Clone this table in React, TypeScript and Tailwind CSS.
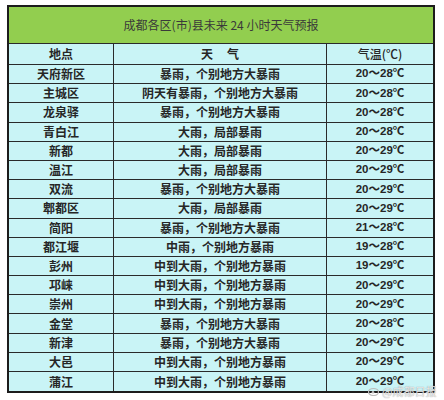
import React from 'react'

interface Row {
  place: string
  weather: string
  temp: string
}

const rows: Row[] = [
  { place: '天府新区', weather: '暴雨，个别地方大暴雨', temp: '20～28℃' },
  { place: '主城区', weather: '阴天有暴雨，个别地方大暴雨', temp: '20～28℃' },
  { place: '龙泉驿', weather: '暴雨，个别地方大暴雨', temp: '20～28℃' },
  { place: '青白江', weather: '大雨，局部暴雨', temp: '20～28℃' },
  { place: '新都', weather: '大雨，局部暴雨', temp: '20～29℃' },
  { place: '温江', weather: '大雨，局部暴雨', temp: '20～29℃' },
  { place: '双流', weather: '暴雨，个别地方大暴雨', temp: '20～29℃' },
  { place: '郫都区', weather: '大雨，局部暴雨', temp: '20～29℃' },
  { place: '简阳', weather: '暴雨，个别地方大暴雨', temp: '21～28℃' },
  { place: '都江堰', weather: '中雨，个别地方暴雨', temp: '19～28℃' },
  { place: '彭州', weather: '中到大雨，个别地方暴雨', temp: '19～29℃' },
  { place: '邛崃', weather: '中到大雨，个别地方暴雨', temp: '20～29℃' },
  { place: '崇州', weather: '中到大雨，个别地方暴雨', temp: '20～29℃' },
  { place: '金堂', weather: '暴雨，个别地方大暴雨', temp: '20～28℃' },
  { place: '新津', weather: '暴雨，个别地方大暴雨', temp: '20～29℃' },
  { place: '大邑', weather: '中到大雨，个别地方暴雨', temp: '20～29℃' },
  { place: '蒲江', weather: '中到大雨，个别地方暴雨', temp: '20～29℃' },
]

const cjk = "font-['SimSun','Noto_Sans_CJK_SC',serif]"

export default function App() {
  return (
    <div className="relative w-[444px] h-[400px] bg-white overflow-hidden">
      <div className="ml-[7px] mt-[5px] w-[428px] border-2 border-[#1c1c1c] bg-[#c9f4f6] text-[#262626]">
        <div className="h-[37px] border-b border-[#2a2a2a] bg-[#92ce4f] flex items-center justify-center text-[12px] text-[#3a3a3a] font-['Noto_Sans_CJK_SC',sans-serif]">
          成都各区(市)县未来 24 小时天气预报
        </div>
        <div className={`grid grid-cols-[105px_213px_1fr] h-[21px] border-b border-[#2a2a2a] text-[12px] font-bold ${cjk}`}>
          <div className="flex items-center justify-center border-r border-[#2a2a2a]">地点</div>
          <div className="flex items-center justify-center border-r border-[#2a2a2a] tracking-[14px] pl-[14px]">天气</div>
          <div className="flex items-center justify-center font-medium font-['Noto_Sans_CJK_SC',sans-serif]">气温(℃)</div>
        </div>
        {rows.map((r, i) => (
          <div
            key={r.place}
            className={`grid grid-cols-[105px_213px_1fr] h-[19.2px] text-[12px] font-bold ${cjk} ${i < rows.length - 1 ? 'border-b border-[#2a2a2a]' : ''}`}
          >
            <div className="flex items-center justify-center border-r border-[#2a2a2a]">{r.place}</div>
            <div className="flex items-center justify-center border-r border-[#2a2a2a]">{r.weather}</div>
            <div className="flex items-center justify-center font-['Liberation_Sans','Noto_Sans_CJK_SC',sans-serif] text-[11.5px]">
              {r.temp}
            </div>
          </div>
        ))}
      </div>
      <div className="absolute left-[368px] top-[385px] flex items-center gap-[2px] text-[11px] leading-[12px] text-white/80 font-['Noto_Sans_CJK_SC',sans-serif] [text-shadow:0_0_1px_#777]">
        <svg width="12" height="10" viewBox="0 0 12 10">
          <ellipse cx="5.5" cy="6" rx="5" ry="3.5" fill="none" stroke="#bbb" strokeWidth="1.2" />
          <circle cx="5" cy="6.3" r="1.3" fill="#bbb" />
        </svg>
        <span>@成都日报</span>
      </div>
    </div>
  )
}
